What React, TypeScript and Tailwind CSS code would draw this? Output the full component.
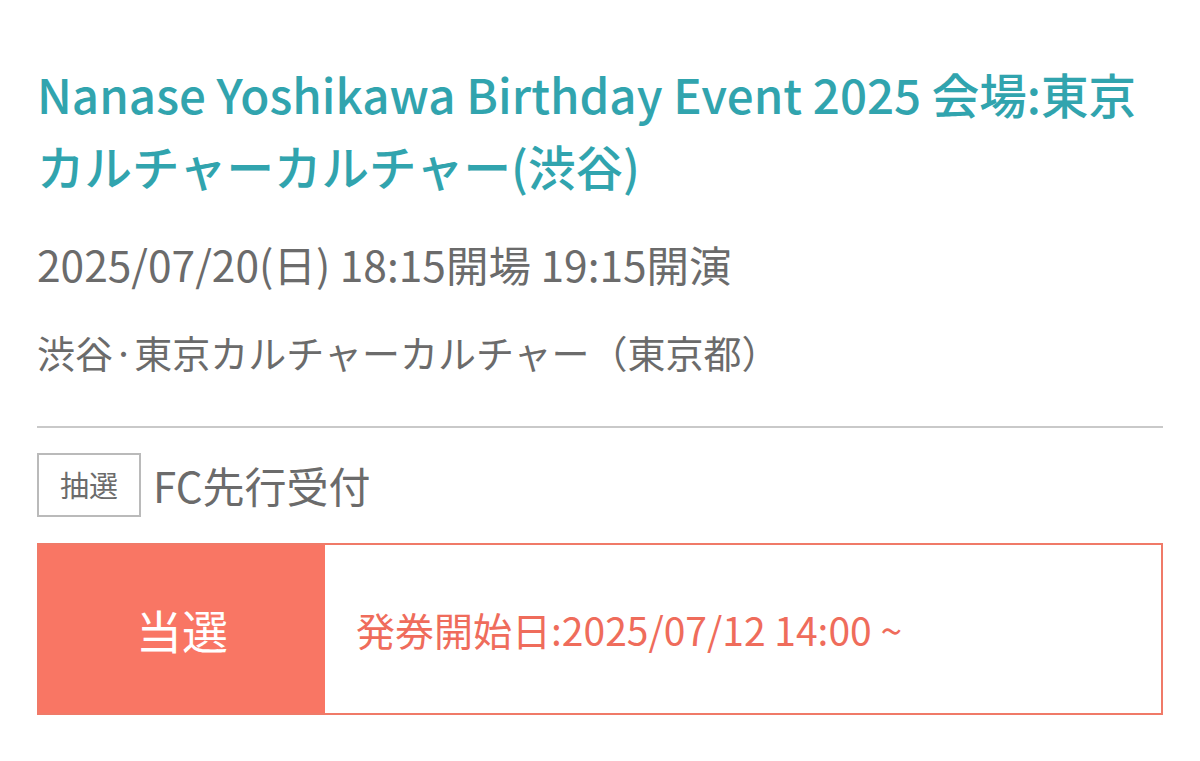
const font = { fontFamily: '"Noto Sans CJK JP", "Noto Sans", sans-serif' };

export default function App() {
  return (
    <div className="w-[1200px] h-[761px] bg-white overflow-hidden" style={font}>
      <div className="px-[37px] pt-[58px]">
        <h1 className="text-[47.5px] leading-[72px] text-[#31a4ae] font-medium">
          Nanase Yoshikawa Birthday Event 2025 会場:東京カルチャーカルチャー(渋谷)
        </h1>
        <p className="mt-[34px] text-[42.5px] leading-[56px] text-[#6b6b6b]">
          2025/07/20(日) 18:15開場 19:15開演
        </p>
        <p className="mt-[34px] text-[38px] leading-[52px] text-[#6b6b6b]">
          渋谷·東京カルチャーカルチャー（東京都）
        </p>
        <div className="mt-[48px] border-t-2 border-[#c9c9c9]" />
        <div className="mt-[25px] flex items-center gap-[12px]">
          <span className="w-[104px] h-[64px] border-2 border-[#bababa] flex items-center justify-center text-[29px] text-[#6b6b6b]">
            抽選
          </span>
          <span className="text-[42px] leading-[56px] text-[#6b6b6b]">FC先行受付</span>
        </div>
        <div className="mt-[26px] h-[172px] flex border-2 border-[#f07a68]">
          <div className="w-[286px] bg-[#f97664] flex items-center justify-center text-[46px] text-white">
            当選
          </div>
          <div className="flex-1 flex items-center pl-[31px] text-[39px] text-[#ef6c5b]">
            発券開始日:2025/07/12 14:00 ~
          </div>
        </div>
      </div>
    </div>
  );
}
